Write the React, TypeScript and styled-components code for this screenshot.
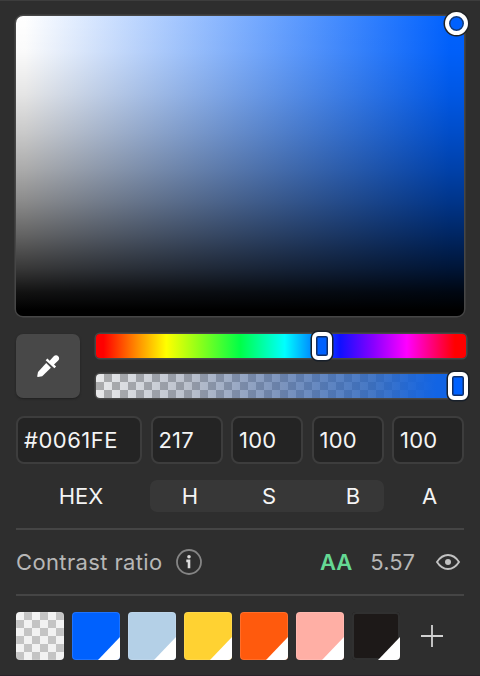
import React from 'react';
import styled, { createGlobalStyle } from 'styled-components';

const GlobalStyle = createGlobalStyle`
  *, *::before, *::after { box-sizing: border-box; }
  body { margin: 0; background: #2e2e2e; overflow: hidden; }
  button { font: inherit; border: 0; padding: 0; }
`;

const checker = (light: string, dark: string) =>
  `repeating-conic-gradient(${dark} 0 25%, ${light} 0 50%) 0 0 / 16px 16px`;

const Panel = styled.main`
  width: 480px;
  height: 676px;
  padding: 15px 16px 0;
  background: #2e2e2e;
  border-top: 1px solid #3d3d3d;
  border-bottom: 1px solid #29232a;
  color: #f4f4f4;
  font: 400 22px/32px Inter, sans-serif;
`;

const Spectrum = styled.div`
  position: relative;
  height: 300px;
  border-radius: 7px;
  background:
    linear-gradient(
      to bottom,
      rgba(0, 0, 0, 0) 0%,
      rgba(0, 0, 0, .02) 12%,
      rgba(0, 0, 0, .1) 26%,
      rgba(0, 0, 0, .21) 39%,
      rgba(0, 0, 0, .33) 51%,
      rgba(0, 0, 0, .46) 62%,
      rgba(0, 0, 0, .61) 73%,
      rgba(0, 0, 0, .78) 84%,
      rgba(0, 0, 0, .93) 92%,
      #000 98%
    ),
    linear-gradient(to right, #fff 2%, #0061fe 97%);
  box-shadow: 0 0 0 1.5px #464646;
`;

const SpectrumHandle = styled.span`
  position: absolute;
  top: -4px;
  right: -4px;
  width: 23px;
  height: 23px;
  border: 4px solid #fff;
  border-radius: 50%;
  background: #0061fe;
  box-shadow: 0 0 0 1.5px #202327, inset 0 0 0 1.5px #17396f;
`;

const SliderArea = styled.div`
  display: flex;
  gap: 16px;
  margin: 17px -2px 0 0;
  height: 66px;
`;

const DropperButton = styled.button`
  display: grid;
  place-items: center;
  width: 64px;
  height: 64px;
  margin-top: 1px;
  border-radius: 7px;
  background: #484848;
  box-shadow: 0 1px 2px #202020;
  color: #fff;
`;

const Sliders = styled.div`
  display: grid;
  gap: 16px;
  width: 370px;
  padding: 1px 0;
`;

const Track = styled.div<{ $fill: string }>`
  position: relative;
  height: 24px;
  border-radius: 4px;
  background: ${({ $fill }) => $fill};
  box-shadow: 0 0 0 1.5px #464646;
`;

const TrackHandle = styled.span<{ $left: number }>`
  position: absolute;
  top: -2px;
  left: ${({ $left }) => $left}px;
  width: 20px;
  height: 28px;
  border: 4px solid #fff;
  border-radius: 6px;
  background: #0061fe;
  box-shadow: 0 0 0 1.5px #18202b, inset 0 0 0 1.5px #102f68;
`;

const Fields = styled.div`
  display: grid;
  grid-template-columns: 126px repeat(4, 72px);
  justify-content: space-between;
  margin-top: 17px;
`;

const Field = styled.div`
  height: 48px;
  padding: 0 6px;
  border: 2px solid #3d3d3d;
  border-radius: 8px;
  background: #242424;
  line-height: 44px;
  letter-spacing: 0.2px;

  &:first-child { letter-spacing: 0.5px; }
`;

const Labels = styled.div`
  display: grid;
  grid-template-columns: 130px 234px 80px;
  height: 32px;
  margin-top: 16px;
  text-align: center;
`;

const HexLabel = styled.span``;

const HsbLabels = styled.div`
  display: grid;
  grid-template-columns: 80px 78px 76px;
  margin: 0 -4px 0 4px;
  border-radius: 7px;
  background: #373737;

  span:last-child { padding-left: 14px; }
`;

const AlphaLabel = styled.span`
  padding-left: 19px;
`;

const Divider = styled.hr<{ $spaced?: boolean }>`
  height: 2px;
  margin: ${({ $spaced }) => ($spaced ? '16px' : '0')} 0 0;
  border: 0;
  background: #454545;
`;

const Contrast = styled.section`
  display: flex;
  align-items: center;
  height: 64px;
  color: #b7b7b7;
`;

const ContrastLabel = styled.span`
  letter-spacing: 0.37px;
`;

const InfoIcon = styled.svg`
  margin-left: 12.5px;
`;

const Rating = styled.strong`
  margin-left: auto;
  color: #65d994;
  font-weight: 600;
`;

const Ratio = styled.span`
  margin: 0 20px 0 18px;
`;

const EyeIcon = styled.svg`
  margin-right: 3px;
`;

const Swatches = styled.div`
  display: flex;
  gap: 8px;
  margin-top: 16px;
`;

const Swatch = styled.div<{ $fill: string; $dark?: boolean }>`
  width: 48px;
  height: 48px;
  border-radius: 4px;
  background: ${({ $fill }) => $fill};
  box-shadow: inset 0 0 0 ${({ $dark }) => ($dark ? '2px #303030' : '1px rgba(255, 255, 255, .12)')};
  overflow: hidden;
`;

const Corner = styled.div`
  width: 22px;
  height: 23px;
  margin: 25px 0 0 26px;
  background: #fff;
  clip-path: polygon(100% 0, 100% 100%, 0 100%);
`;

const AddButton = styled.button`
  display: grid;
  place-items: center;
  width: 48px;
  height: 48px;
  background: none;
  color: #d2d2d2;
`;

const hue =
  'linear-gradient(to right, #f00 2%, #ff8c00 11%, #ff0 19%, #8cff1a 28%, #00ff48 39%, #0ff 51%, #0080ff 59%, #1010ff 66%, #80f 75%, #f0f 84%, #f00 97%)';
const alpha = `linear-gradient(to right, rgba(90, 100, 120, .05), rgba(105, 120, 150, .4) 25%, rgba(70, 105, 165, .68) 50%, rgba(38, 98, 190, .85) 75%, #1264e4 92%), ${checker('#f0f0f0', '#b0b0b0')}`;
const values = ['#0061FE', '217', '100', '100', '100'];
const colors = ['#0061fe', '#b4d0e7', '#ffd232', '#ff5a0d', '#ffafa5', '#1d1918'];

export default function App() {
  return (
    <>
      <GlobalStyle />
      <Panel>
        <Spectrum><SpectrumHandle /></Spectrum>
        <SliderArea>
          <DropperButton aria-label="Pick color">
            <svg width="24" height="24" viewBox="0 0 24 24" fill="currentColor">
              <path d="M10.2 9 14.9 13.8 6.2 22.3 1.8 23 1.2 22.4 2 18Z" />
              <path d="m9.7 6.2 1.7-1.7 2.3 2.2 3.8-4.2C19 1 21 1 22.2 2.2c1.3 1.3 1.3 3.1-.2 4.6l-4 3.7 2.1 2.1-1.7 1.7Z" />
            </svg>
          </DropperButton>
          <Sliders>
            <Track $fill={hue}><TrackHandle $left={216} /></Track>
            <Track $fill={alpha}><TrackHandle $left={352} /></Track>
          </Sliders>
        </SliderArea>
        <Fields>{values.map((value, i) => <Field key={i}>{value}</Field>)}</Fields>
        <Labels>
          <HexLabel>HEX</HexLabel>
          <HsbLabels><span>H</span><span>S</span><span>B</span></HsbLabels>
          <AlphaLabel>A</AlphaLabel>
        </Labels>
        <Divider $spaced />
        <Contrast>
          <ContrastLabel>Contrast ratio</ContrastLabel>
          <InfoIcon width="28" height="28" viewBox="0 0 28 28" fill="none">
            <circle cx="14" cy="14" r="12" stroke="#858585" strokeWidth="1.8" />
            <circle cx="14" cy="8.8" r="1.8" fill="#ddd" />
            <path d="M11.3 12.9H14v7.3" stroke="#ddd" strokeWidth="2.6" />
          </InfoIcon>
          <Rating>AA</Rating>
          <Ratio>5.57</Ratio>
          <EyeIcon width="26" height="20" viewBox="0 0 26 20" fill="none">
            <path d="M2 10Q6.5 3 13 3t11 7q-4.5 7-11 7T2 10Z" stroke="#c2c2c2" strokeWidth="1.9" />
            <circle cx="13" cy="10" r="3" fill="#c2c2c2" />
          </EyeIcon>
        </Contrast>
        <Divider />
        <Swatches>
          <Swatch $fill={checker('#f2f2f2', '#c4c4c4')} />
          {colors.map((color, i) => <Swatch key={color} $fill={color} $dark={i === 5}><Corner /></Swatch>)}
          <AddButton aria-label="Add color">
            <svg width="24" height="24" viewBox="0 0 24 24" fill="none">
              <path d="M1 12h22M12 1v22" stroke="currentColor" strokeWidth="1.8" />
            </svg>
          </AddButton>
        </Swatches>
      </Panel>
    </>
  );
}
